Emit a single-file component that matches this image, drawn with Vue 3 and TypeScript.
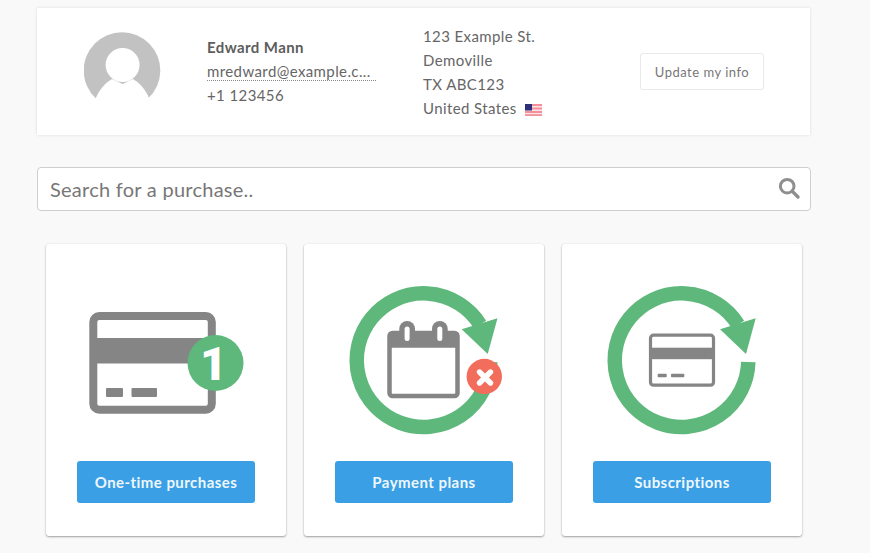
<script setup lang="ts">
const buttons: string[] = ['One-time purchases', 'Payment plans', 'Subscriptions']
</script>

<template>
  <main class="page">
    <section class="profile">
      <div class="avatar-cell">
        <svg class="avatar" viewBox="84 32 78 68" width="78" height="68" aria-hidden="true">
          <path d="M95.7 98.3A38.3 38.3 0 1 1 148.3 98.3L122 100Z" fill="#c2c2c2" />
          <circle cx="122.6" cy="65" r="17" fill="#fff" />
          <path d="M95 100C99 90 105 83 112 79L122.6 84L133 79C140 83 146 90 150 100Z" fill="#fff" />
        </svg>
      </div>
      <div class="contact">
        <strong class="name">Edward Mann</strong>
        <span class="email">mredward@example.c...</span>
        <span class="phone">+1 123456</span>
      </div>
      <address class="postal">
        <span>123 Example St.</span>
        <span>Demoville</span>
        <span>TX ABC123</span>
        <span class="country">United States
          <svg class="flag" viewBox="0 0 17 12" width="17" height="12" aria-hidden="true">
            <rect width="17" height="12" fill="#f58f9b" />
            <rect y="2" width="17" height="1.5" fill="#fbe3e5" />
            <rect y="5.5" width="17" height="1.5" fill="#fbe3e5" />
            <rect y="9" width="17" height="1.2" fill="#fbe3e5" />
            <rect width="7" height="6.5" fill="#2b2f7c" />
          </svg>
        </span>
      </address>
      <button class="update" type="button">Update my info</button>
    </section>

    <div class="search">
      <input class="search-input" type="text" placeholder="Search for a purchase.." />
      <svg class="search-icon" viewBox="0 0 24 24" width="24" height="24" aria-hidden="true">
        <circle cx="10.2" cy="10.2" r="6.8" fill="none" stroke="#8f8f8f" stroke-width="3" />
        <path d="M15.4 15.4L21 21" stroke="#8f8f8f" stroke-width="3.4" stroke-linecap="round" />
      </svg>
    </div>

    <section class="options">
      <article class="option">
        <svg class="art" viewBox="46 244 240 217" width="240" height="217" aria-hidden="true">
          <rect x="93.3" y="316" width="118.5" height="93.8" rx="6" fill="#fff" stroke="#858585" stroke-width="8" />
          <rect x="93" y="338" width="119" height="25.5" fill="#858585" />
          <rect x="106" y="388" width="17" height="9" rx="1" fill="#858585" />
          <rect x="131.5" y="388" width="25.5" height="9" rx="1" fill="#858585" />
          <circle cx="215.5" cy="363" r="28" fill="#5eb87b" />
          <text x="213.5" y="380" class="one">1</text>
        </svg>
        <button class="cta" type="button">{{ buttons[0] }}</button>
      </article>

      <article class="option">
        <svg class="art" viewBox="304 244 240 217" width="240" height="217" aria-hidden="true">
          <path d="M490.3 362A66.8 66.8 0 1 1 480 324.5" fill="none" stroke="#5eb87b" stroke-width="14.5" />
          <path d="M497.5 318.3L461.7 329.3L487.7 354Z" fill="#5eb87b" />
          <rect x="389.5" y="333" width="68" height="63" rx="3" fill="#fff" stroke="#858585" stroke-width="4.5" />
          <rect x="388" y="332" width="71" height="15.7" rx="3" fill="#858585" />
          <rect x="399.3" y="321" width="15.7" height="24" rx="7.8" fill="#858585" />
          <rect x="404.6" y="326.5" width="5" height="14.5" rx="2.5" fill="#fff" />
          <rect x="432" y="321" width="15.7" height="24" rx="7.8" fill="#858585" />
          <rect x="437.3" y="326.5" width="5" height="14.5" rx="2.5" fill="#fff" />
          <circle cx="484.3" cy="376.5" r="17.7" fill="#f26d5b" />
          <path d="M479.5 372L490.5 383M490.5 372L479.5 383" stroke="#fff" stroke-width="5.4" stroke-linecap="round" />
        </svg>
        <button class="cta" type="button">{{ buttons[1] }}</button>
      </article>

      <article class="option">
        <svg class="art" viewBox="562 244 240 217" width="240" height="217" aria-hidden="true">
          <path d="M748.3 362A66.8 66.8 0 1 1 738 324.5" fill="none" stroke="#5eb87b" stroke-width="14.5" />
          <path d="M755.7 318.3L720 329.3L746 354Z" fill="#5eb87b" />
          <rect x="650.5" y="335.2" width="63" height="50" rx="3" fill="#fff" stroke="#858585" stroke-width="3.2" />
          <rect x="650" y="347.7" width="64" height="11.5" fill="#858585" />
          <rect x="657.7" y="373.7" width="9" height="3.6" rx="0.8" fill="#858585" />
          <rect x="671" y="373.7" width="13.3" height="3.6" rx="0.8" fill="#858585" />
        </svg>
        <button class="cta" type="button">{{ buttons[2] }}</button>
      </article>
    </section>
  </main>
</template>

<style>
html,
body {
  margin: 0;
  background: #f9f9f9;
}
</style>

<style scoped>
.page {
  box-sizing: border-box;
  width: 870px;
  height: 553px;
  overflow: hidden;
  padding: 8px 59px 0 37px;
  font-family: Lato, "Liberation Sans", sans-serif;
  color: #666;
}
.profile {
  display: grid;
  grid-template-columns: 170px 216px 217px auto;
  align-items: center;
  width: 773px;
  height: 127px;
  background: #fff;
  box-shadow: 0 0 3px rgba(0, 0, 0, 0.12);
}
.avatar-cell {
  padding-left: 47px;
}
.avatar {
  display: block;
  margin-bottom: 11px;
}
.contact {
  display: flex;
  flex-direction: column;
  align-items: flex-start;
  font-size: 15px;
  letter-spacing: 0.4px;
  margin-top: 1px;
}
.name {
  font-size: 15px;
  line-height: 24px;
  font-weight: 700;
  color: #5d5d5d;
}
.email {
  width: 169px;
  line-height: 24px;
  border-bottom: 1px dotted #888;
  height: 22px;
  box-sizing: border-box;
}
.phone {
  line-height: 28px;
}
.postal {
  display: flex;
  flex-direction: column;
  font-style: normal;
  font-size: 15px;
  letter-spacing: 0.4px;
  line-height: 24px;
}
.country {
  display: flex;
  align-items: center;
  gap: 8px;
}
.flag {
  display: block;
  margin-top: 4px;
}
.update {
  box-sizing: border-box;
  width: 124px;
  height: 37px;
  padding: 1px 0 0;
  margin-top: -1px;
  background: #fff;
  border: 1px solid #e9e9e9;
  border-radius: 3px;
  font: 13px Lato, "Liberation Sans", sans-serif;
  letter-spacing: 0.5px;
  color: #777;
}
.search {
  position: relative;
  margin-top: 32px;
}
.search-input {
  display: block;
  box-sizing: border-box;
  width: 774px;
  height: 44px;
  padding: 0 44px 0 12px;
  background: #fff;
  border: 1px solid #cfcfcf;
  border-radius: 4px;
  outline: none;
  font: 20px Lato, "Liberation Sans", sans-serif;
  letter-spacing: 0.26px;
}
.search-input::placeholder {
  color: #777;
  opacity: 1;
}
.search-icon {
  position: absolute;
  top: 9px;
  right: 10px;
}
.options {
  display: flex;
  gap: 18px;
  margin: 33px 0 0 9px;
}
.option {
  display: flex;
  flex-direction: column;
  align-items: center;
  width: 240px;
  height: 292px;
  background: #fff;
  border-radius: 3px;
  box-shadow: 0 1px 2px rgba(0, 0, 0, 0.35), 0 0 2px rgba(0, 0, 0, 0.08);
}
.art {
  display: block;
}
.one {
  font-family: Roboto, Lato, sans-serif;
  font-size: 47px;
  font-weight: 900;
  fill: #fff;
  text-anchor: middle;
}
.cta {
  width: 178px;
  height: 42px;
  padding: 0;
  background: #3a9fe4;
  border: 0;
  border-radius: 3px;
  font: 700 15px Lato, "Liberation Sans", sans-serif;
  letter-spacing: 0.45px;
  color: #eef7fd;
}
</style>
